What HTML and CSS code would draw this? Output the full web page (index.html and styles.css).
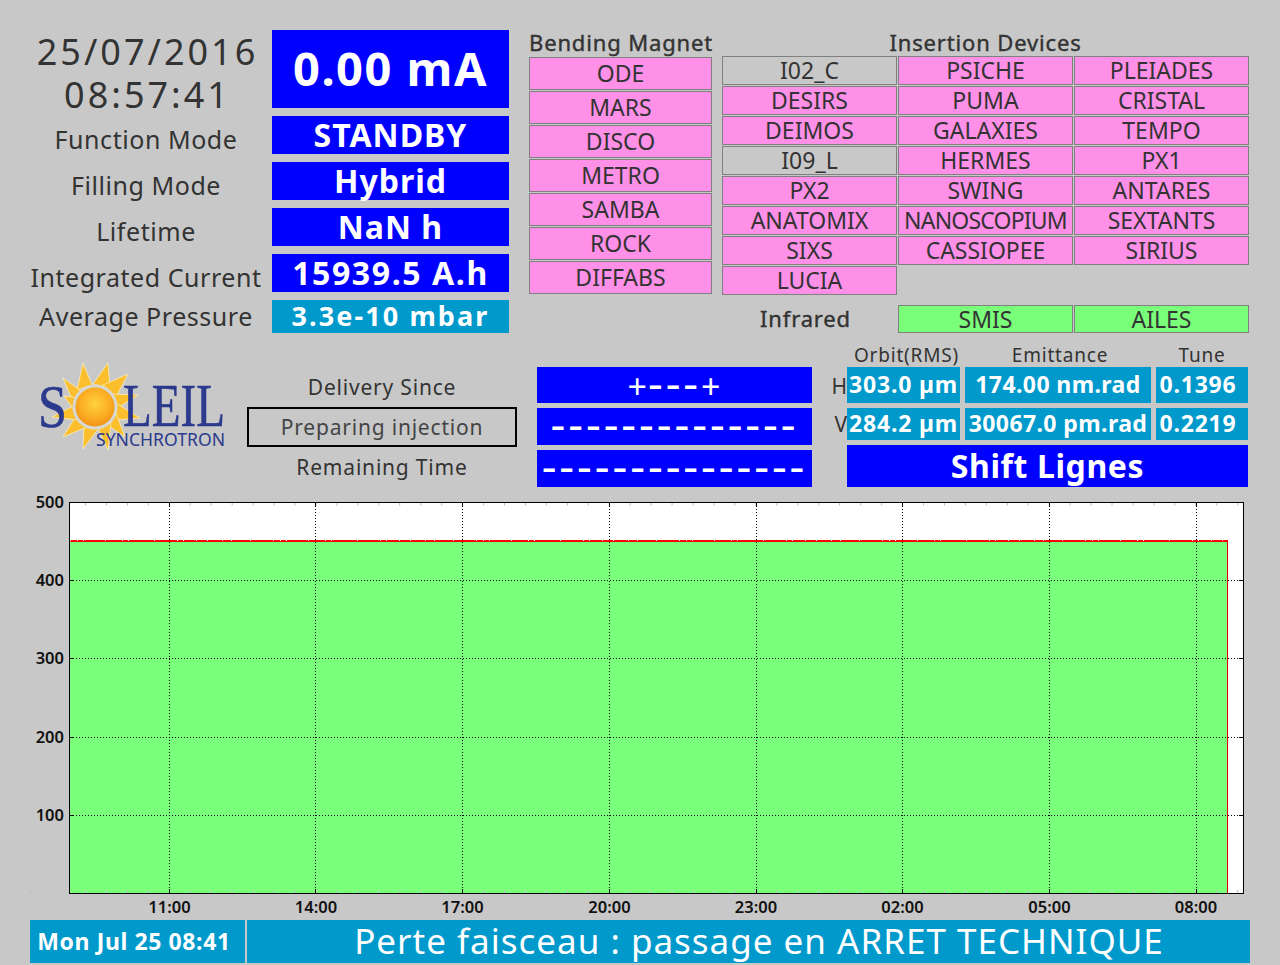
FILE: index.html
```html
<!DOCTYPE html>
<html lang="en">
<head>
  <meta charset="UTF-8" />
  <title>Machine Status</title>
  <link rel="stylesheet" href="styles.css">
</head>
<body>
  <main class="page">
    <div class="top">
      <section class="summary">
        <div class="clock">25/07/2016<br>08:57:41</div>
        <div class="value blue current">0.00 mA</div>
        <div class="label">Function Mode</div>
        <div class="value blue">STANDBY</div>
        <div class="label">Filling Mode</div>
        <div class="value blue">Hybrid</div>
        <div class="label">Lifetime</div>
        <div class="value blue">NaN h</div>
        <div class="label">Integrated Current</div>
        <div class="value blue integrated">15939.5 A.h</div>
        <div class="label label-last">Average Pressure</div>
        <div class="value cyan">3.3e-10 mbar</div>
      </section>

      <section class="bending">
        <h2>Bending Magnet</h2>
        <div class="bm-list">
          <div class="line on">ODE</div>
          <div class="line on">MARS</div>
          <div class="line on">DISCO</div>
          <div class="line on">METRO</div>
          <div class="line on">SAMBA</div>
          <div class="line on">ROCK</div>
          <div class="line on">DIFFABS</div>
        </div>
      </section>

      <section class="insertion">
        <h2>Insertion Devices</h2>
        <div class="id-grid">
          <div class="line">I02_C</div>
          <div class="line on">PSICHE</div>
          <div class="line on">PLEIADES</div>
          <div class="line on">DESIRS</div>
          <div class="line on">PUMA</div>
          <div class="line on">CRISTAL</div>
          <div class="line on">DEIMOS</div>
          <div class="line on">GALAXIES</div>
          <div class="line on">TEMPO</div>
          <div class="line">I09_L</div>
          <div class="line on">HERMES</div>
          <div class="line on">PX1</div>
          <div class="line on">PX2</div>
          <div class="line on">SWING</div>
          <div class="line on">ANTARES</div>
          <div class="line on">ANATOMIX</div>
          <div class="line on tight">NANOSCOPIUM</div>
          <div class="line on">SEXTANTS</div>
          <div class="line on">SIXS</div>
          <div class="line on">CASSIOPEE</div>
          <div class="line on">SIRIUS</div>
          <div class="line on">LUCIA</div>
        </div>
        <div class="ir-grid">
          <div class="ir-title">Infrared</div>
          <div class="line ir">SMIS</div>
          <div class="line ir">AILES</div>
        </div>
      </section>
    </div>

    <div class="middle">
      <svg class="logo" viewBox="32 358 215 100" width="215" height="100">
        <defs>
          <radialGradient id="sunDisk" cx="0.5" cy="0.42" r="0.6">
            <stop offset="0" stop-color="#ffd23c"/>
            <stop offset="0.6" stop-color="#fbac22"/>
            <stop offset="1" stop-color="#ee8a12"/>
          </radialGradient>
        </defs>
        <g fill="#fbbf2e" stroke="#fff3c0" stroke-width="0.7">
          <polygon points="83,363 92,385 77,390"/>
          <polygon points="108,363 110,388 93,384"/>
          <polygon points="128,374 116,397 103,385"/>
          <polygon points="138,395 116,409 113,394"/>
          <polygon points="140,418 115,420 116,403"/>
          <polygon points="125,437 106,424 116,413"/>
          <polygon points="108,450 97,426 111,422"/>
          <polygon points="83,449 84,424 99,428"/>
          <polygon points="63,437 76,416 87,427"/>
          <polygon points="52,417 75,405 78,420"/>
          <polygon points="63,378 84,393 74,404"/>
          <polygon points="64,396 80,398 74,410"/>
        </g>
        <text class="logo-big" x="38" y="427" textLength="29" lengthAdjust="spacingAndGlyphs">S</text>
        <text class="logo-big" x="123" y="426" textLength="102" lengthAdjust="spacingAndGlyphs">LEIL</text>
        <circle cx="95" cy="407" r="21" fill="url(#sunDisk)" stroke="#d8d8d0" stroke-width="3"/>
        <text class="logo-small" x="96" y="446" textLength="129" lengthAdjust="spacingAndGlyphs">SYNCHROTRON</text>
      </svg>

      <div class="status">
        <div class="status-label">Delivery Since</div>
        <div class="status-box">Preparing injection</div>
        <div class="status-label">Remaining Time</div>
      </div>

      <div class="times">
        <div class="value blue time plus"><span><span class="cross">+</span>---<span class="cross">+</span></span></div>
        <div class="value blue time">--------------</div>
        <div class="value blue time">---------------</div>
      </div>

      <div class="beam">
        <div class="beam-head"></div>
        <div class="beam-head orbit">Orbit(RMS)</div>
        <div class="beam-head emit-head">Emittance</div>
        <div class="beam-head">Tune</div>

        <div class="plane">H</div>
        <div class="value cyan small">303.0 µm</div>
        <div class="value cyan small emit">174.00 nm.rad</div>
        <div class="value cyan small tune">0.1396</div>

        <div class="plane plane-v">V</div>
        <div class="value cyan small">284.2 µm</div>
        <div class="value cyan small emit">30067.0 pm.rad</div>
        <div class="value cyan small tune">0.2219</div>

        <div class="value blue shift">Shift Lignes</div>
      </div>
    </div>

    <svg class="chart" viewBox="0 490 1280 430" width="1280" height="430">
      <rect x="69.5" y="502.5" width="1174" height="391" fill="#fff"/>
      <rect x="70" y="541" width="1157" height="352" fill="#7aff7a"/>
      <line x1="70" y1="541" x2="1228" y2="541" stroke="#f00" stroke-width="2"/>
      <line x1="70" y1="540.5" x2="1228" y2="540.5" stroke="#fff" stroke-dasharray="1 6 1 5 1 21 1 16 1 5 1 25 1 22 1 5 1 12 1 10 1 14 1 8 1 18 1 22"/>
      <line x1="1227.5" y1="541" x2="1227.5" y2="893" stroke="#e00000"/>

      <g class="minor">
        <line x1="85" y1="504" x2="1244" y2="504"/>
        <line x1="85" y1="891.5" x2="1244" y2="891.5"/>
        <line x1="30.5" y1="502" x2="30.5" y2="505"/>
        <line x1="30.5" y1="890" x2="30.5" y2="893"/>
      </g>

      <g class="grid">
        <line x1="169.5" y1="503" x2="169.5" y2="893"/>
        <line x1="315.5" y1="503" x2="315.5" y2="893"/>
        <line x1="462.5" y1="503" x2="462.5" y2="893"/>
        <line x1="609.5" y1="503" x2="609.5" y2="893"/>
        <line x1="756.5" y1="503" x2="756.5" y2="893"/>
        <line x1="902.5" y1="503" x2="902.5" y2="893"/>
        <line x1="1049.5" y1="503" x2="1049.5" y2="893"/>
        <line x1="1196.5" y1="503" x2="1196.5" y2="893"/>
        <line x1="70" y1="580.5" x2="1244" y2="580.5"/>
        <line x1="70" y1="658.5" x2="1244" y2="658.5"/>
        <line x1="70" y1="737.5" x2="1244" y2="737.5"/>
        <line x1="70" y1="815.5" x2="1244" y2="815.5"/>
      </g>

      <rect x="69.5" y="502.5" width="1174" height="391" fill="none" stroke="#000"/>

      <g class="ticks">
        <path d="M169.5 503v4M315.5 503v4M462.5 503v4M609.5 503v4M756.5 503v4M902.5 503v4M1049.5 503v4M1196.5 503v4"/>
        <path d="M169.5 893v-4M315.5 893v-4M462.5 893v-4M609.5 893v-4M756.5 893v-4M902.5 893v-4M1049.5 893v-4M1196.5 893v-4"/>
        <path d="M70 580.5h4M70 658.5h4M70 737.5h4M70 815.5h4M1243 580.5h-4M1243 658.5h-4M1243 737.5h-4M1243 815.5h-4"/>
      </g>

      <g class="y-axis">
        <text x="64" y="508">500</text>
        <text x="64" y="586">400</text>
        <text x="64" y="664">300</text>
        <text x="64" y="743">200</text>
        <text x="64" y="821">100</text>
      </g>
      <g class="x-axis">
        <text x="169.5" y="913">11:00</text>
        <text x="316" y="913">14:00</text>
        <text x="462.5" y="913">17:00</text>
        <text x="609.5" y="913">20:00</text>
        <text x="756" y="913">23:00</text>
        <text x="902.5" y="913">02:00</text>
        <text x="1049.5" y="913">05:00</text>
        <text x="1196" y="913">08:00</text>
      </g>
    </svg>

    <footer class="footer">
      <div class="foot-date">Mon Jul 25 08:41</div>
      <div class="foot-msg">Perte faisceau : passage en ARRET TECHNIQUE</div>
    </footer>
  </main>
</body>
</html>
```

FILE: styles.css
```css
html, body {
  margin: 0;
  padding: 0;
}

body {
  background-color: #c8c8c8;
  color: #333;
  font-family: "Noto Sans", "DejaVu Sans", sans-serif;
}

.page {
  width: 1280px;
  height: 965px;
  overflow: hidden;
}

.top {
  display: flex;
  padding: 30px 0 0 30px;
  height: 303px;
}

.summary {
  display: grid;
  grid-template-columns: 232px 237px;
  grid-template-rows: 78px 38px 38px 38px 38px 33px;
  column-gap: 10px;
  row-gap: 8px;
}

.clock {
  font-size: 36px;
  line-height: 43px;
  letter-spacing: 3px;
  text-align: center;
  margin-left: 3px;
}

.label {
  font-size: 25px;
  letter-spacing: 0.55px;
  text-align: center;
  line-height: 46px;
  white-space: nowrap;
}

.label-last {
  line-height: 33px;
}

.value {
  display: flex;
  align-items: center;
  justify-content: center;
  box-sizing: border-box;
  padding-bottom: 2px;
  color: white;
  font-weight: bold;
  white-space: nowrap;
}

.blue { background-color: #0000ff; font-size: 32px; letter-spacing: 1px; }
.cyan { background-color: #0099cc; font-size: 27px; letter-spacing: 2.1px; }
.current { font-size: 47px; letter-spacing: 1.5px; }
.integrated { letter-spacing: 1.6px; }

h2 {
  margin: 0;
  font-size: 22px;
  font-weight: normal;
  letter-spacing: 0.85px;
  text-align: center;
  white-space: nowrap;
  -webkit-text-stroke: 0.4px #333;
}

.bending {
  width: 183px;
  margin-left: 20px;
}

.bending h2 {
  height: 27px;
  line-height: 25px;
}

.bm-list {
  display: grid;
  grid-auto-rows: 33px;
  row-gap: 1px;
}

.line {
  box-sizing: border-box;
  border: 1px solid #808080;
  font-size: 23px;
  line-height: 1;
  display: flex;
  align-items: center;
  justify-content: center;
  white-space: nowrap;
}

.on { background-color: #ff90e8; }
.ir { background-color: #7aff7a; }
.tight { letter-spacing: -0.8px; }

.insertion {
  width: 527px;
  margin-left: 10px;
}

.insertion h2 {
  height: 26px;
  line-height: 24px;
}

.id-grid, .ir-grid {
  display: grid;
  grid-template-columns: repeat(3, 175px);
  column-gap: 1px;
}

.id-grid {
  grid-auto-rows: 29px;
  row-gap: 1px;
}

.id-grid .line {
  padding-bottom: 1px;
}

.ir-grid {
  grid-auto-rows: 28px;
  margin-top: 10px;
}

.ir-title {
  font-size: 22px;
  letter-spacing: 0.85px;
  line-height: 26px;
  text-align: center;
  padding-right: 8px;
  -webkit-text-stroke: 0.4px #333;
}

.middle {
  display: flex;
  padding-top: 12px;
  height: 142px;
}

.logo {
  display: block;
  margin: 13px 0 0 32px;
  flex: none;
}

.logo-big {
  font-family: "Liberation Serif", serif;
  font-size: 62px;
  fill: #2b3a8c;
  stroke: #2b3a8c;
  stroke-width: 0.6px;
}

.logo-small {
  font-family: "Noto Sans", sans-serif;
  font-size: 18px;
  fill: #2b3a8c;
}

.status {
  width: 270px;
  padding-top: 22px;
  box-sizing: border-box;
  height: 142px;
}

.status-label, .status-box {
  height: 40px;
  box-sizing: border-box;
  font-size: 21px;
  letter-spacing: 0.8px;
  display: flex;
  align-items: center;
  justify-content: center;
}

.status-box {
  border: 2px solid #000;
  color: #444;
}

.times {
  width: 275px;
  margin-left: 20px;
  padding-top: 22px;
  display: grid;
  grid-template-rows: 36px 37px 37px;
  row-gap: 5px;
  align-content: start;
}

.time {
  font-size: 46px;
  line-height: 1;
  letter-spacing: 2.9px;
  font-weight: normal;
  padding-bottom: 10px;
}

.plus { padding-bottom: 8px; }
.cross { font-size: 34px; letter-spacing: 1px; }

.beam {
  margin-left: 18px;
  display: grid;
  grid-template-columns: 12px 113px 186px 92px;
  grid-template-rows: 17px 36px 32px 42px;
  column-gap: 5px;
  row-gap: 5px;
  align-content: start;
}

.beam-head {
  font-size: 19px;
  line-height: 20px;
  letter-spacing: 0.8px;
  text-align: center;
  white-space: nowrap;
}

.orbit { padding-left: 6px; }
.emit-head { padding-left: 4px; }

.plane {
  font-size: 21px;
  width: 17px;
  text-align: right;
  line-height: 38px;
}

.plane-v { line-height: 32px; }

.small { font-size: 23px; letter-spacing: 0.8px; }
.emit { letter-spacing: 0.4px; }
.tune { padding-right: 8px; }

.shift {
  grid-column: 2 / 5;
  font-size: 32px;
  letter-spacing: 0.6px;
}

.chart {
  display: block;
  margin-top: 3px;
}

.grid line {
  stroke: #000;
  stroke-dasharray: 1 2;
}

.minor line {
  stroke: #bbb;
  stroke-width: 3;
  stroke-dasharray: 1 19.95;
}

.minor line:nth-child(n+3) {
  stroke-width: 1;
  stroke-dasharray: none;
}

.ticks path {
  stroke: #000;
  fill: none;
}

.y-axis text, .x-axis text {
  font-family: "Noto Sans", sans-serif;
  font-size: 16.5px;
  font-weight: 600;
  fill: #111;
}

.y-axis text { text-anchor: end; }
.x-axis text { text-anchor: middle; }

.footer {
  display: flex;
  column-gap: 2px;
  margin-left: 30px;
  height: 43px;
}

.foot-date, .foot-msg {
  background-color: #0099cc;
  color: white;
  display: flex;
  align-items: center;
  justify-content: center;
  box-sizing: border-box;
  padding-bottom: 2px;
  white-space: nowrap;
}

.foot-date {
  width: 215px;
  padding-right: 7px;
  font-size: 23px;
  font-weight: bold;
  letter-spacing: 0.6px;
}

.foot-msg {
  width: 1003px;
  padding-left: 21px;
  font-size: 35px;
  letter-spacing: 1px;
}
```
